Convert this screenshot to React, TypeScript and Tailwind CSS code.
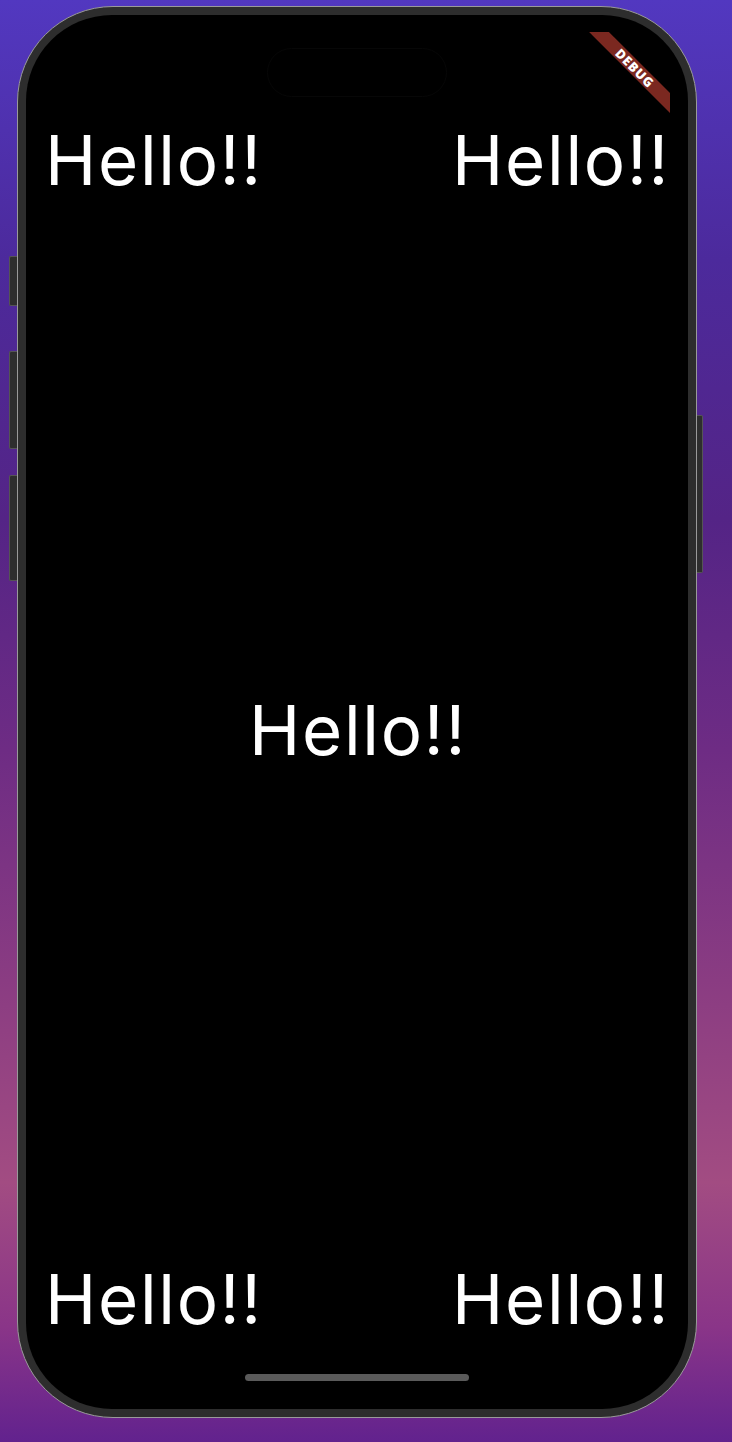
const font = { fontFamily: 'Inter, "Noto Sans", sans-serif' };

function Hello() {
  return (
    <span className="text-[69px] leading-none tracking-[1.7px] text-white" style={font}>
      Hello!!
    </span>
  );
}

function DebugBanner() {
  return (
    <div className="absolute right-[18px] top-[17px] h-[100px] w-[100px] overflow-hidden">
      <div className="absolute left-[-15.5px] top-[28.5px] flex h-[14px] w-[160px] rotate-45 items-center justify-center bg-[#7b2820]">
        <span
          className="text-[13px] font-extrabold leading-none tracking-[0.06em] text-white"
          style={{ fontFamily: '"Open Sans", "DejaVu Sans", sans-serif' }}
        >
          DEBUG
        </span>
      </div>
    </div>
  );
}

export default function App() {
  return (
    <div className="h-[1442px] w-[732px] overflow-hidden bg-[linear-gradient(180deg,#5238c0_0%,#4c2a9c_18%,#542486_36%,#6e2c84_52%,#8a3c82_68%,#a24c82_82%,#8a3588_92%,#62228e_100%)] pl-[17px] pt-[6px]">
      {/* phone */}
      <div className="relative h-[1412px] w-[680px] rounded-[96px] border border-[#9a9a9a] bg-[#2d2d2d] p-[8px]">
        {/* side buttons */}
        <div className="absolute left-[-9px] top-[249px] h-[50px] w-[8px] rounded-l-[2px] border border-r-0 border-[#555] bg-[#2e2e2e]" />
        <div className="absolute left-[-9px] top-[344px] h-[98px] w-[8px] rounded-l-[2px] border border-r-0 border-[#555] bg-[#2e2e2e]" />
        <div className="absolute left-[-9px] top-[468px] h-[106px] w-[8px] rounded-l-[2px] border border-r-0 border-[#555] bg-[#2e2e2e]" />
        <div className="absolute right-[-7px] top-[408px] h-[158px] w-[6px] rounded-r-[2px] border border-l-0 border-[#555] bg-[#2e2e2e]" />

        {/* screen */}
        <div className="relative flex h-full w-full flex-col overflow-hidden rounded-[86px] bg-black pb-[28px] pt-[111px]">
          <div className="absolute left-[241px] top-[33px] h-[49px] w-[180px] rounded-full border border-[#070707]" />

          <div className="flex justify-between pl-[19px] pr-[18px]">
            <Hello />
            <Hello />
          </div>

          <div className="flex flex-1 items-center justify-center pl-[2px]">
            <Hello />
          </div>

          <div className="flex justify-between pl-[19px] pr-[18px]">
            <Hello />
            <Hello />
          </div>

          <div className="mx-auto mt-[40px] h-[7px] w-[224px] rounded-full bg-[#5a5a5a]" />

          <DebugBanner />
        </div>
      </div>
    </div>
  );
}
